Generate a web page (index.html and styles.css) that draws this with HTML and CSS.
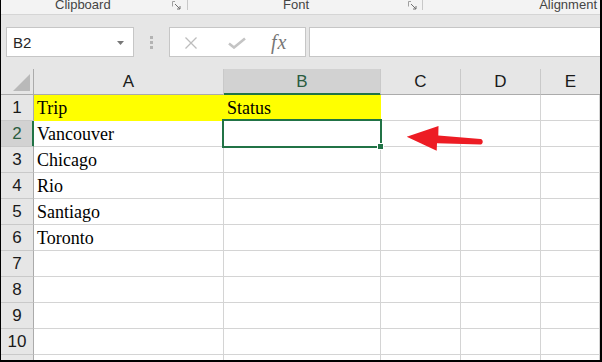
FILE: index.html
```html
<!DOCTYPE html>
<html>
<head>
<meta charset="utf-8">
<link rel="stylesheet" href="styles.css">
</head>
<body>
<div class="frame">
  <div class="ribbon">
    <div class="group g-clip">
      <span class="glabel">Clipboard</span>
      <svg class="launcher" width="10" height="9" viewBox="0 0 10 9"><path d="M0.5 0.5V5.5M0.5 0.5H3" stroke="#a0a0a0" fill="none"/><path d="M3 3L8 8M8 5V8H5" stroke="#707070" fill="none"/></svg>
    </div>
    <div class="group g-font">
      <span class="glabel">Font</span>
      <svg class="launcher" width="10" height="9" viewBox="0 0 10 9"><path d="M0.5 0.5V5.5M0.5 0.5H3" stroke="#a0a0a0" fill="none"/><path d="M3 3L8 8M8 5V8H5" stroke="#707070" fill="none"/></svg>
    </div>
    <div class="group g-align">
      <span class="glabel">Alignment</span>
    </div>
  </div>

  <div class="fbar">
    <div class="namebox">
      <span class="nametext">B2</span>
      <svg class="caret" width="7" height="4" viewBox="0 0 7 4"><path d="M0 0H7L3.5 4Z" fill="#777"/></svg>
    </div>
    <div class="grip"><i></i><i></i><i></i></div>
    <div class="fbtns">
      <svg class="ico-x" width="12" height="12" viewBox="0 0 12 12"><path d="M0.5 0.5L11.5 11.5M11.5 0.5L0.5 11.5" stroke="#bdbdbd" stroke-width="1.3" fill="none"/></svg>
      <svg class="ico-ok" width="18" height="12" viewBox="0 0 18 12"><path d="M1 6.5L6 10.5L17 1.5" stroke="#c4c4c4" stroke-width="2.6" fill="none"/></svg>
      <span class="fx">fx</span>
    </div>
    <div class="finput"></div>
  </div>

  <div class="sheet">
    <div class="grid">
      <div class="corner"><svg width="32" height="25" viewBox="0 0 32 25"><path d="M12 22H29V5Z" fill="#b9b9b9"/></svg></div>
      <div class="ch">A</div>
      <div class="ch ch-sel">B</div>
      <div class="ch">C</div>
      <div class="ch">D</div>
      <div class="ch ch-last">E</div>

      <div class="rh">1</div>
      <div class="c fill">Trip</div>
      <div class="c fill">Status</div>
      <div class="c"></div><div class="c"></div><div class="c"></div>

      <div class="rh rh-sel">2</div>
      <div class="c">Vancouver</div>
      <div class="c"></div><div class="c"></div><div class="c"></div><div class="c"></div>

      <div class="rh">3</div>
      <div class="c">Chicago</div>
      <div class="c"></div><div class="c"></div><div class="c"></div><div class="c"></div>

      <div class="rh">4</div>
      <div class="c">Rio</div>
      <div class="c"></div><div class="c"></div><div class="c"></div><div class="c"></div>

      <div class="rh">5</div>
      <div class="c">Santiago</div>
      <div class="c"></div><div class="c"></div><div class="c"></div><div class="c"></div>

      <div class="rh">6</div>
      <div class="c">Toronto</div>
      <div class="c"></div><div class="c"></div><div class="c"></div><div class="c"></div>

      <div class="rh">7</div>
      <div class="c"></div><div class="c"></div><div class="c"></div><div class="c"></div><div class="c"></div>

      <div class="rh">8</div>
      <div class="c"></div><div class="c"></div><div class="c"></div><div class="c"></div><div class="c"></div>

      <div class="rh">9</div>
      <div class="c"></div><div class="c"></div><div class="c"></div><div class="c"></div><div class="c"></div>

      <div class="rh">10</div>
      <div class="c"></div><div class="c"></div><div class="c"></div><div class="c"></div><div class="c"></div>

      <div class="rh">11</div>
      <div class="c"></div><div class="c"></div><div class="c"></div><div class="c"></div><div class="c"></div>
    </div>

    <div class="selection"><div class="handle"></div></div>

    <svg class="arrow" width="90" height="40" viewBox="0 0 90 40">
      <path d="M6.7 16.7L38.5 6L38.3 15.6L80.5 19C83.5 19.3 83.5 24.5 80.5 24.4L37 23.3L36.7 30.8Z" fill="#ed1c24"/>
    </svg>
  </div>
</div>
</body>
</html>
```

FILE: styles.css
```css
* {
  box-sizing: border-box;
}

html, body {
  margin: 0;
  padding: 0;
  background: #ffffff;
}

.frame {
  width: 602px;
  height: 362px;
  border-left: 1px solid #000;
  border-right: 2px solid #000;
  border-bottom: 2px solid #000;
  overflow: hidden;
  background: #e6e6e6;
  font-family: "Liberation Sans", Arial, sans-serif;
  position: relative;
}

/* ribbon tail */
.ribbon {
  height: 15px;
  background: #f3f3f3;
  border-bottom: 1px solid #d5d5d5;
  display: flex;
  align-items: flex-start;
}

.group {
  height: 10px;
  display: flex;
  align-items: flex-start;
  border-right: 1px solid #c8c8c8;
}

.glabel {
  font-size: 13px;
  line-height: 10px;
  color: #444;
  white-space: nowrap;
}

.launcher {
  display: block;
  margin-top: 1px;
  margin-left: auto;
}

.g-clip {
  width: 187px;
}
.g-clip .glabel {
  margin-left: 54px;
}
.g-clip .launcher {
  margin-right: 5px;
}

.g-font {
  width: 235px;
}
.g-font .glabel {
  margin-left: 95px;
}
.g-font .launcher {
  margin-right: 4px;
}

.g-align {
  flex: 1;
  border-right: none;
  justify-content: flex-end;
  padding-right: 3px;
}

/* formula bar */
.fbar {
  display: flex;
  align-items: stretch;
  padding: 12px 0 12px 5px;
  height: 54px;
}

.namebox {
  width: 128px;
  height: 30px;
  background: #fff;
  border: 1px solid #c6c6c6;
  display: flex;
  align-items: center;
  padding-left: 6px;
}

.nametext {
  font-size: 15px;
  color: #262626;
  line-height: 20px;
  margin-top: 1px;
}

.caret {
  display: block;
  margin-left: auto;
  margin-right: 9px;
  margin-top: 1px;
}

.grip {
  margin-left: 16px;
  display: flex;
  flex-direction: column;
  justify-content: center;
  gap: 2px;
}

.grip i {
  display: block;
  width: 3px;
  height: 3px;
  background: #b3b3b3;
}

.fbtns {
  margin-left: 16px;
  width: 137px;
  height: 30px;
  background: #fff;
  border: 1px solid #c6c6c6;
  display: flex;
  align-items: center;
}

.ico-x {
  display: block;
  margin-left: 15px;
  margin-top: 1px;
}

.ico-ok {
  display: block;
  margin-left: 31px;
  margin-top: 2px;
}

.fx {
  margin-left: 25px;
  font-family: "Liberation Serif", "Times New Roman", serif;
  font-style: italic;
  font-size: 20px;
  letter-spacing: 1px;
  color: #777;
  line-height: 24px;
}

.finput {
  margin-left: 3px;
  margin-right: -10px;
  flex: 1;
  height: 30px;
  background: #fff;
  border: 1px solid #c6c6c6;
}

/* sheet */
.sheet {
  position: relative;
}

.grid {
  display: grid;
  grid-template-columns: 33px 190px 157px 80px 80px 1fr;
  grid-template-rows: 26px repeat(11, 26px);
  background: #fff;
}

.corner {
  background: #e6e6e6;
  border-right: 1px solid #ababab;
  border-bottom: 1px solid #ababab;
}

.corner svg {
  display: block;
}

.ch {
  background: #e6e6e6;
  border-right: 1px solid #c9c9c9;
  border-bottom: 1px solid #ababab;
  text-align: center;
  font-size: 17px;
  line-height: 25px;
  color: #1a1a1a;
}

.ch-sel {
  background: #d2d2d2;
  color: #2a5c3f;
  border-bottom-color: #217346;
  box-shadow: inset 0 -1px 0 #217346;
}

.ch-last {
  border-right: none;
}

.rh {
  background: #e6e6e6;
  border-right: 1px solid #ababab;
  border-bottom: 1px solid #c9c9c9;
  text-align: center;
  font-size: 17px;
  line-height: 25px;
  color: #1a1a1a;
}

.rh-sel {
  background: #d2d2d2;
  color: #2a5c3f;
  border-right-color: #217346;
  box-shadow: inset -1px 0 0 #217346;
}

.c {
  border-right: 1px solid #d4d4d4;
  border-bottom: 1px solid #d4d4d4;
  font-family: "Liberation Serif", "Times New Roman", serif;
  font-size: 18px;
  line-height: 26px;
  padding-left: 3px;
  color: #000;
  white-space: nowrap;
  overflow: hidden;
}

.fill {
  background: #ffff00;
  border-right-color: #ffff00;
  border-bottom-color: #ffff00;
}

.selection {
  position: absolute;
  left: 221px;
  top: 50px;
  width: 160px;
  height: 29px;
  border: 2px solid #217346;
}

.handle {
  position: absolute;
  right: -4px;
  bottom: -4px;
  width: 7px;
  height: 7px;
  background: #217346;
  border: 1px solid #fff;
}

.arrow {
  position: absolute;
  left: 399px;
  top: 51px;
  display: block;
}
```
